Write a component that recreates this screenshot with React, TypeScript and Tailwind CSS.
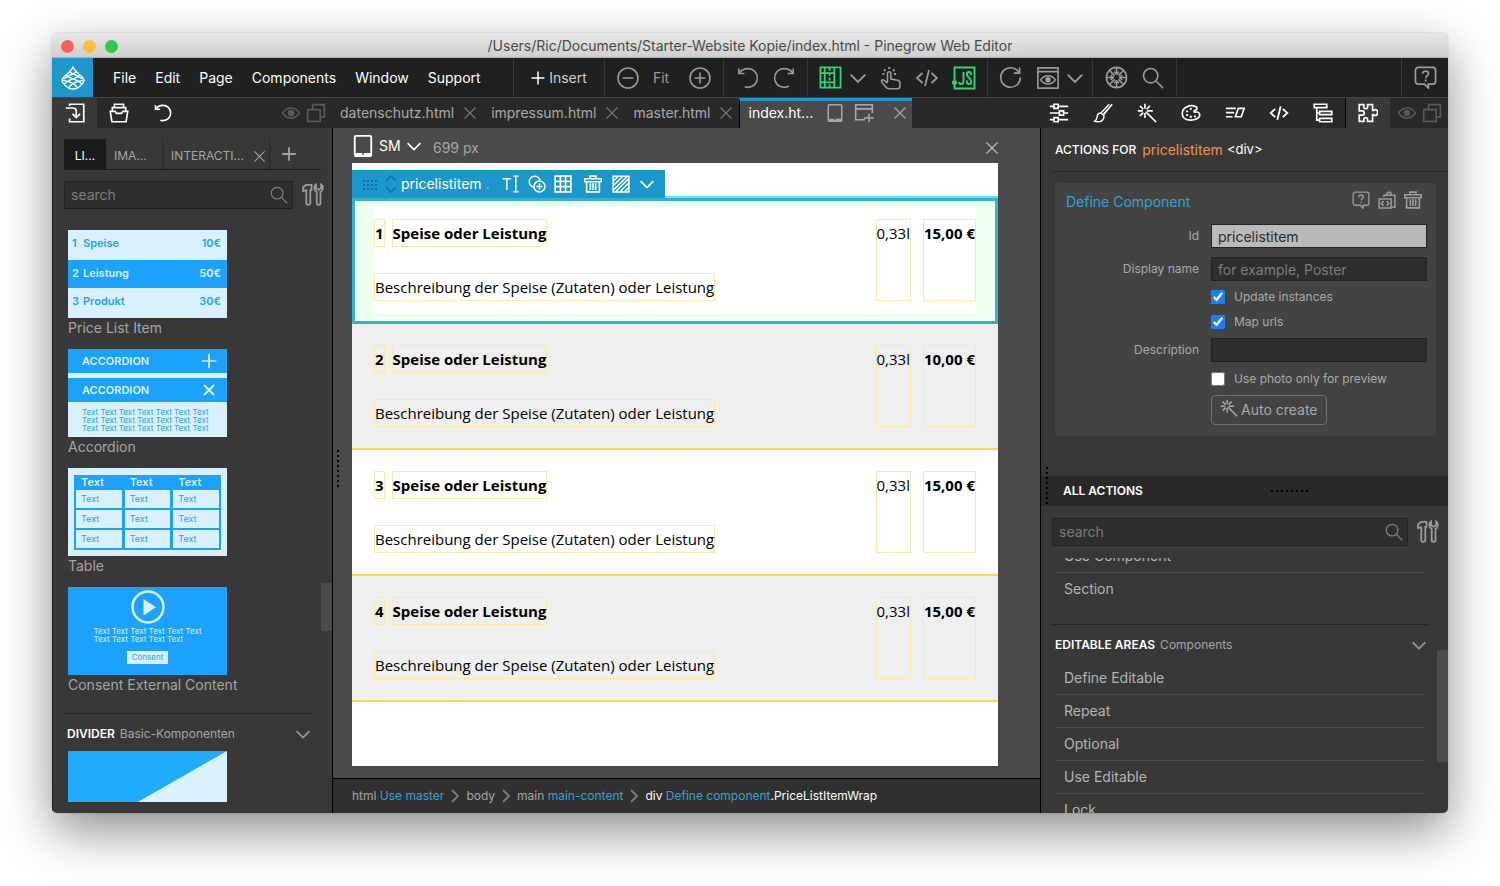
import type { ReactNode } from "react";

/* ---------- icons ---------- */

type IconProps = { className?: string; children: ReactNode; w?: number };

function Svg({ className = "size-6", children, w = 1.5 }: IconProps) {
  return (
    <svg
      viewBox="0 0 24 24"
      className={`${className} shrink-0`}
      fill="none"
      stroke="currentColor"
      strokeWidth={w}
      aria-hidden="true"
    >
      {children}
    </svg>
  );
}

const Logo = () => (
  <Svg className="size-6" w={1.3}>
    <path d="M12 1c1.500 3.500 4.500 6 7.500 8.600 2 1.700 3.500 3.300 3.500 4.900 0 2.300-2.500 4.300-5 6.500-1.600 1.500-3.500 2-6 2s-4.400-.5-6-2c-2.500-2.200-5-4.200-5-6.500 0-1.600 1.500-3.200 3.500-4.900C7.500 7 10.500 4.500 12 1z" />
    <path d="M8.500 5.500c1 2 5 2.500 8 4.500 2 1.300 3.800 2 4.500 3M5 9c2 2.800 6 3 9.500 4.800 3 1.500 5 2 6 4.200M1.500 14c3 1 7 1.500 10.500 3.500 2.500 1.500 4 2.500 4.500 5" />
    <path d="M15.500 5.500c-1 2-5 2.500-8 4.500-2 1.300-3.800 2-4.500 3M19 9c-2 2.800-6 3-9.500 4.800-3 1.500-5 2-6 4.200M22.500 14c-3 1-7 1.500-10.500 3.500-2.500 1.500-4 2.500-4.500 5" />
  </Svg>
);

const Plus = ({ className = "size-4" }: { className?: string }) => (
  <Svg className={className} w={2.6}>
    <path d="M12 1v22M1 12h22" />
  </Svg>
);
const PlusThin = () => (
  <Svg className="size-[18px]" w={2.4}>
    <path d="M12 3v18M3 12h18" />
  </Svg>
);
const Cross = ({ className = "size-3" }: { className?: string }) => (
  <Svg className={className} w={2.200}>
    <path d="M1 1l22 22M23 1L1 23" />
  </Svg>
);
const Chevron = ({ className = "size-4" }: { className?: string }) => (
  <Svg className={className} w={2.8}>
    <path d="M1 7l11 11L23 7" />
  </Svg>
);
const ZoomOut = () => (
  <Svg w={1.600}>
    <circle cx="12" cy="12" r="10" />
    <path d="M6.500 12h11" />
  </Svg>
);
const ZoomIn = () => (
  <Svg w={1.600}>
    <circle cx="12" cy="12" r="10" />
    <path d="M6.500 12h11M12 6.500v11" />
  </Svg>
);
const Undo = ({ className = "size-6", w = 1.7 }: { className?: string; w?: number }) => (
  <Svg className={className} w={w}>
    <path d="M2 1.500v5.500h6" />
    <path d="M2.500 6.500C4.500 3.500 8 1.800 12 1.800c6 0 10.200 4.500 10.200 10.200S17.800 22.200 12 22.200c-1.500 0-2.500-.2-3.500-.6" />
  </Svg>
);
const Redo = () => (
  <Svg className="size-[22px]" w={1.700}>
    <path d="M22 1.500v5.500h-6" />
    <path d="M21.500 6.500C19.500 3.500 16 1.800 12 1.800 6 1.800 1.800 6.300 1.800 12S6.200 22.200 12 22.200c2 0 4-.6 5.500-1.700" />
  </Svg>
);
const Reload = () => (
  <Svg className="size-[23px]" w={1.700}>
    <path d="M21.500 1.500v6h-6" />
    <path d="M21 7C19 3.800 15.800 1.800 12 1.800 6.200 1.800 1.800 6.300 1.800 12S6.200 22.200 12 22.200 22.200 17.800 22.200 12" />
  </Svg>
);
const GridGuides = () => (
  <Svg className="size-[23px]" w={1.900}>
    <path d="M1.500 1.500h21v21h-21zM6 1.500v21M16 1.500v21M1.500 7.500H16M1.500 17H16" />
    <path d="M11 1.500v3.500M11 7.500v3M11 12v3M11 19v3.500" />
  </Svg>
);
const Hand = () => (
  <Svg w={1.600}>
    <path d="M8.500 16V7.500a1.700 1.700 0 013.400 0V13l6.600 1.200c1.600.3 2.500 1.300 2.500 2.800V20c0 1.700-1 2.700-2.500 2.700H10c-1.500 0-2.300-.6-3.200-1.700l-4-4.700c-1.300-1.600.8-3.300 2.200-2l3.500 2.700" />
    <path d="M3.500 8h2M5 3.500l1.500 1.300M10.200 1v2M15.500 3.500L14 4.800M17 8h-2" strokeWidth="2.200" />
  </Svg>
);
const Code = ({ className = "size-6", w = 1.7 }: { className?: string; w?: number }) => (
  <Svg className={className} w={w}>
    <path d="M7.500 7L2 12l5.500 5M16.500 7l5.500 5-5.500 5M14 4l-4 16" />
  </Svg>
);
const ScriptBadge = () => (
  <Svg w={1.900}>
    <path d="M2.500 14V1.500h20v21h-20V19" />
    <circle cx="2.500" cy="16.500" r="2.500" fill="currentColor" stroke="none" />
    <path d="M11.500 6v9.500c0 1.500-.7 2.500-2 2.500S7 17.500 7 16M19 9V8c0-1.300-.8-2-2-2s-2.200.7-2.200 2c0 3.500 4.400 4 4.400 7.500 0 1.600-.9 2.500-2.200 2.500s-2.200-.8-2.200-2.500v-1" />
  </Svg>
);
const BrowserEye = () => (
  <Svg className="size-[22px]" w={1.800}>
    <path d="M1 1h22v22H1zM1 5h22" />
    <path d="M4 14c2-3 5-4.500 8-4.500s6 1.500 8 4.500c-2 3-5 4.500-8 4.500S6 17 4 14z" />
    <circle cx="12" cy="14" r="3" fill="currentColor" stroke="none" />
  </Svg>
);
const Snowflake = () => (
  <Svg className="size-[23px]" w={1.700}>
    <circle cx="12" cy="12" r="10.500" />
    <path d="M12 1.500v8M12 14.500v8M1.500 12h8M14.500 12h8M5 5l5 5M14 14l5 5M19 5l-5 5M10 14l-5 5" />
    <path d="M9.500 6L12 8.500 14.500 6M9.500 18l2.500-2.500L14.500 18M6 9.500L8.500 12 6 14.500M18 9.500L15.500 12l2.500 2.500" />
  </Svg>
);
const Magnifier = ({ className = "size-6", w = 1.7 }: { className?: string; w?: number }) => (
  <Svg className={className} w={w}>
    <circle cx="9.500" cy="9.500" r="7.800" />
    <path d="M15 15l8 8" />
  </Svg>
);
const Help = ({ className = "size-6" }: { className?: string }) => (
  <Svg className={className} w={1.800}>
    <path d="M4.500 1.500h15a3 3 0 013 3V16a3 3 0 01-3 3H15v4l-4-4H4.500a3 3 0 01-3-3V4.500a3 3 0 013-3z" />
    <path d="M9 8.200C9 6.300 10.300 5.300 12 5.300s3.200 1 3.200 2.700c0 2-3 2.200-3 4.700M12.200 14.200v2" />
  </Svg>
);
const InsertPanel = () => (
  <Svg className="size-5" w={2}>
    <path d="M5.500 3.500v-2h17v21h-17v-4" />
    <path d="M1 6h8.500c2.500 0 4 1.500 4 4v7M9 13l4.500 4.500L18 13" />
  </Svg>
);
const Drawer = () => (
  <Svg className="size-5" w={2}>
    <path d="M4 10V5.500h16V10M6.500 5.500v-4h11v4" />
    <path d="M1.500 10h6l1.500 2.500h6L16.500 10h6l-2 12.500h-17z" />
  </Svg>
);
const Eye = () => (
  <Svg className="size-5" w={1.800}>
    <path d="M2 12c2.500-4 6-6 10-6s7.500 2 10 6c-2.500 4-6 6-10 6S4.500 16 2 12z" />
    <circle cx="12" cy="12" r="4" fill="currentColor" stroke="none" />
  </Svg>
);
const Copy = () => (
  <Svg className="size-5" w={2}>
    <path d="M8 7V2h14v15h-5M2 8h15v14H2z" />
  </Svg>
);
const Tablet = ({ className = "size-5" }: { className?: string }) => (
  <Svg className={className} w={2}>
    <rect x="3" y="1" width="18" height="22" rx="1.500" />
    <path d="M3 21h18" strokeWidth="3" />
    <circle cx="12" cy="20.700" r="1" fill="#4a4a4a" stroke="none" />
  </Svg>
);
const WindowPlus = () => (
  <Svg className="size-5" w={1.900}>
    <path d="M13 20H2V2h20v10M2 7h20M18 13v10M12 18h12" />
  </Svg>
);
const Sliders = () => (
  <Svg className="size-5" w={2}>
    <path d="M1 4h5M11 4h12M1 12h11M18 12h5M1 20h5M11 20h12M6 1.500h5v5H6zM12.500 9.500h5v5h-5zM6 17.500h5v5H6z" />
  </Svg>
);
const Brush = () => (
  <Svg className="size-5" w={1.700}>
    <path d="M23 1.500L12.500 13.500M19.500 1.500L9.500 12M23 1.500l-10 12.500" />
    <path d="M9 12c-2.500.2-3.800 1.800-4 4.500-.2 2.300-1 4-3 5.500 4.500 1 9.500.2 10.800-3.800.4-1.500.4-2.400.2-3.200z" />
  </Svg>
);
const Wand = ({ className = "size-5" }: { className?: string }) => (
  <Svg className={className} w={2}>
    <path d="M10.500 10.500l12.500 12.500M9.500 1v6M9.500 12v6M1 9.500h6M12 9.500h7M3.500 3.500l4 4M15.500 3.500l-4 4M3.500 15.500l4-4" />
  </Svg>
);
const Palette = () => (
  <Svg className="size-5" w={2}>
    <path d="M18 4.500C11 1 1.500 5 1.500 12.500c0 5 4 8 10 8 5.500 0 11-2 11-6 0-3.500-3-4-5-3.500-2.500.5-2.500-2 0-2.500 2-.5 2.500-3 .5-4z" />
    <path d="M6 10h2.500M10.500 7H13M6 14.500h2.500M10.500 16.500H13M15.500 16H18" strokeWidth="2.200" />
  </Svg>
);
const Motion = () => (
  <Svg className="size-5" w={2}>
    <path d="M1 6.500h12M1 11.500h10M1 16.500h8M16 6.500h7l-3.500 10h-7z" />
  </Svg>
);
const Tree = () => (
  <Svg className="size-5" w={2}>
    <path d="M1.500 1.500h15v4h-15zM8 10h14.500v4H8zM8 18.500h14.500v4H8zM4.500 5.500v15H8M4.500 12H8" />
  </Svg>
);
const Puzzle = () => (
  <Svg className="size-5" w={2}>
    <path d="M1.500 2H7v3.500a2.500 2.500 0 004.500 0V2h6v7h1.500c1-1.500 4.500-1.500 4.500 2.500S20 15.500 19 14h-1.500v8h-6v-3a2.500 2.500 0 00-4.500 0v3H1.500v-7.500H5a2.500 2.500 0 000-5H1.500z" />
  </Svg>
);
const Tools = () => (
  <svg
    viewBox="0 0 22 24"
    className="h-6 w-[22px] shrink-0"
    fill="none"
    stroke="currentColor"
    strokeWidth="1.800"
    aria-hidden="true"
  >
    <path d="M1 9V4.500L4 1.800h5.500v5H8.300V20c0 2.500-4 2.500-4 0V7.500H1z" />
    <path d="M14 1.500c-2.300 1.600-2.300 6 .7 7.300V20c0 2.500 3.800 2.500 3.800 0V8.800c3-1.300 3-5.700.7-7.300v3.700l-2.600 1.500L14 5.200z" />
  </svg>
);
const TextTool = () => (
  <Svg className="size-[18px]" w={1.900}>
    <path d="M1 5h11M6.500 5v15M15 1.500h7M15 22.500h7M18.500 1.500v21" />
  </Svg>
);
const AddClass = () => (
  <Svg className="size-[18px]" w={2}>
    <path d="M8.300 16.200A7.300 7.300 0 1116.200 8" />
    <circle cx="15.300" cy="15.300" r="7.300" />
    <path d="M12 8.700L8.500 12M15.300 11.300v8M11.300 15.300h8" />
  </Svg>
);
const Table = () => (
  <Svg className="size-[18px]" w={2.200}>
    <path d="M1.500 1.500h21v21h-21zM8.500 1.500v21M15.500 1.500v21M1.500 8.500h21M1.500 15.500h21" />
  </Svg>
);
const Trash = () => (
  <Svg className="size-[18px]" w={2.200}>
    <path d="M1 5h22v4H1zM8 5V1.500h8V5M3.500 9v13.500h17V9M8.500 11v9M12 11v9M15.500 11v9" />
  </Svg>
);
const Hatch = () => (
  <Svg className="size-[18px]" w={2}>
    <path d="M1.500 1.500h21v21h-21zM2 8l6-6M2 14L14 2M2 20L20 2M5 22L22 5M11 22l11-11M17 22l5-5" />
  </Svg>
);
const PasteCode = () => (
  <Svg className="size-[18px]" w={2}>
    <path d="M8 8V5.500h3.500C11.500.5 18 .5 18 5.500h4.500v16H19M10 5.500h10" />
    <path d="M1.500 10.500h16v12h-16zM7.500 13.500l-3 3 3 3M11.500 13.500l3 3-3 3" />
  </Svg>
);
const Crumb = () => (
  <svg viewBox="0 0 8 14" className="h-3.5 w-2 shrink-0 text-[#7d7d7d]" fill="none" stroke="currentColor" strokeWidth="1.800" aria-hidden="true">
    <path d="M1 1l6 6-6 6" />
  </svg>
);

function IconButton({
  label,
  className = "",
  children,
}: {
  label: string;
  className?: string;
  children: ReactNode;
}) {
  return (
    <button type="button" aria-label={label} className={`flex shrink-0 items-center justify-center ${className}`}>
      {children}
    </button>
  );
}

function Dots({ vertical = false }: { vertical?: boolean }) {
  return (
    <div className={vertical ? "flex flex-col gap-[3px]" : "flex gap-[3px]"}>
      {Array.from({ length: 8 }, (_, i) => (
        <span key={i} className="size-[2px] bg-black" />
      ))}
    </div>
  );
}

/* ---------- top bars ---------- */

function TitleBar() {
  return (
    <header className="relative flex h-[25px] shrink-0 items-center justify-center border-b border-[#b1b1b1] bg-linear-to-b from-[#e8e8e8] to-[#cfcfcf] pt-0.5">
      <div className="absolute left-[9px] flex gap-[9px]">
        <span className="size-[13px] rounded-full bg-[#fc605b]" />
        <span className="size-[13px] rounded-full bg-[#fdbc40]" />
        <span className="size-[13px] rounded-full bg-[#34c84a]" />
      </div>
      <h1 className="truncate text-sm text-[#4a4a4a]">
        /Users/Ric/Documents/Starter-Website Kopie/index.html - Pinegrow Web Editor
      </h1>
    </header>
  );
}

const menus = ["File", "Edit", "Page", "Components", "Window", "Support"];

function MenuBar() {
  return (
    <div className="flex h-10 shrink-0 border-b border-[#454545] bg-[#202020] text-[#9b9b9b]">
      <div className="flex w-[41px] shrink-0 items-center justify-center bg-[#1f97cb] text-white">
        <Logo />
      </div>
      <nav className="flex flex-1 items-center gap-[19px] pl-5 text-sm text-white">
        {menus.map((m) => (
          <button type="button" key={m}>
            {m}
          </button>
        ))}
      </nav>
      <div className="flex w-[91px] items-center justify-center border-l border-[#373737]">
        <button type="button" className="flex items-center gap-1 text-sm text-[#d0d0d0]">
          <Plus className="size-3.5 text-white" />
          Insert
        </button>
      </div>
      <div className="flex w-[119px] items-center justify-between border-l border-[#373737] px-[11px]">
        <IconButton label="Zoom out"><ZoomOut /></IconButton>
        <span className="pr-1.5 text-sm">Fit</span>
        <IconButton label="Zoom in"><ZoomIn /></IconButton>
      </div>
      <div className="flex w-[84px] items-center justify-center gap-3.5 border-l border-[#373737]">
        <IconButton label="Undo"><Undo className="size-[22px]" /></IconButton>
        <IconButton label="Redo"><Redo /></IconButton>
      </div>
      <div className="flex w-[180px] items-center justify-between border-l border-[#373737] px-[11px]">
        <div className="flex items-center gap-2">
          <IconButton label="Show grid" className="text-[#2fd676]"><GridGuides /></IconButton>
          <IconButton label="Grid options"><Chevron /></IconButton>
        </div>
        <IconButton label="Interact with page"><Hand /></IconButton>
        <IconButton label="Code"><Code /></IconButton>
        <IconButton label="Run scripts" className="text-[#2fd676]"><ScriptBadge /></IconButton>
      </div>
      <div className="flex w-[105px] items-center justify-between border-l border-[#373737] pr-[9px] pl-[11px]">
        <IconButton label="Reload"><Reload /></IconButton>
        <div className="flex items-center gap-2">
          <IconButton label="Preview in browser"><BrowserEye /></IconButton>
          <IconButton label="Browser options"><Chevron /></IconButton>
        </div>
      </div>
      <div className="flex w-[84px] items-center justify-between border-l border-[#373737] px-3">
        <IconButton label="Freeze"><Snowflake /></IconButton>
        <IconButton label="Find"><Magnifier className="size-[22px]" /></IconButton>
      </div>
      <div className="w-[225px] border-l border-[#373737]" />
      <div className="flex w-[47px] items-center justify-center border-l border-[#373737]">
        <IconButton label="Help"><Help className="size-[23px]" /></IconButton>
      </div>
    </div>
  );
}

const files = ["datenschutz.html", "impressum.html", "master.html"];
const tools: [string, ReactNode][] = [
  ["Properties", <Sliders />],
  ["Style", <Brush />],
  ["Effects", <Wand />],
  ["Design", <Palette />],
  ["Interactions", <Motion />],
  ["Source", <Code className="size-5" w={2.200} />],
  ["Tree", <Tree />],
];

function TabRow() {
  return (
    <div className="flex h-[30px] shrink-0 bg-[#292929] text-white">
      <div className="flex w-[280px] shrink-0 items-center">
        <IconButton label="Library" className="h-full w-[45px] bg-[#393939]"><InsertPanel /></IconButton>
        <IconButton label="Project" className="w-11"><Drawer /></IconButton>
        <IconButton label="History" className="w-11"><Undo className="size-[18px]" w={2.200} /></IconButton>
        <div className="ml-auto flex gap-[5px] pr-1.5 text-[#5a5a5a]">
          <IconButton label="Hide panel"><Eye /></IconButton>
          <IconButton label="Detach panel"><Copy /></IconButton>
        </div>
      </div>
      <div className="flex min-w-0 flex-1 items-center text-sm text-[#a9a9a9]">
        {files.map((f) => (
          <div key={f} className="flex items-center gap-2.5 pr-[7px] pl-2">
            <button type="button">{f}</button>
            <IconButton label={`Close ${f}`} className="text-[#777777]"><Cross className="size-3" /></IconButton>
          </div>
        ))}
        <div className="flex h-full w-[173px] items-center border-t-[3px] border-l border-t-[#1f97cb] border-l-black bg-[#4a4a4a] pr-1.5 pb-[3px] pl-2">
          <button type="button" className="text-white">index.ht...</button>
          <IconButton label="Device view" className="ml-auto"><Tablet className="size-[18px]" /></IconButton>
          <IconButton label="New window" className="ml-2.5"><WindowPlus /></IconButton>
          <IconButton label="Close index.html" className="ml-5"><Cross className="size-3" /></IconButton>
        </div>
      </div>
      <div className="flex shrink-0 items-center">
        {tools.map(([label, icon]) => (
          <IconButton key={label} label={label} className="w-11">{icon}</IconButton>
        ))}
        <IconButton label="Actions" className="h-full w-[45px] border-l border-black bg-[#393939]"><Puzzle /></IconButton>
        <div className="flex w-[58px] justify-center gap-[5px] text-[#5a5a5a]">
          <IconButton label="Hide actions"><Eye /></IconButton>
          <IconButton label="Detach actions"><Copy /></IconButton>
        </div>
      </div>
    </div>
  );
}

/* ---------- shared ---------- */

function SearchRow({ id }: { id: string }) {
  return (
    <div className="flex items-center gap-[9px]">
      <div className="flex h-7 min-w-0 flex-1 items-center border border-[#222222] bg-[#2e2e2e] px-1">
        <label htmlFor={id} className="sr-only">Search</label>
        <input
          id={id}
          placeholder="search"
          className="min-w-0 flex-1 bg-transparent pl-[2px] text-sm text-white outline-none placeholder:text-[#7d7d7d]"
        />
        <Magnifier className="size-[18px] text-[#7d7d7d]" w={1.700} />
      </div>
      <IconButton label="Tools" className="text-[#9b9b9b]"><Tools /></IconButton>
    </div>
  );
}

function SectionHead({ title, sub }: { title: string; sub: string }) {
  return (
    <div className="flex items-center border-t border-[#262626]">
      <h2 className="flex-1 pl-[3px] text-xs leading-10 font-semibold text-white">
        {title} <span className="pl-0.5 font-normal text-[#a5a5a5]">{sub}</span>
      </h2>
      <IconButton label={`Collapse ${title}`} className="pr-0.5 text-[#9b9b9b]"><Chevron className="size-3.5" /></IconButton>
    </div>
  );
}

/* ---------- library ---------- */

function Thumb({ label, children }: { label: string; children: ReactNode }) {
  return (
    <figure className="h-[119px]">
      <div className="h-[88px] w-[159px] overflow-hidden bg-[#d9f0fe] text-[#1ca1fd]">{children}</div>
      <figcaption className="text-sm leading-5 text-[#a5a5a5]">{label}</figcaption>
    </figure>
  );
}

function PriceThumb() {
  const rows = [
    ["1", "Speise", "10€"],
    ["2", "Leistung", "50€"],
    ["3", "Produkt", "30€"],
  ];
  return (
    <div className="text-[11px] font-semibold">
      {rows.map(([n, name, price], i) => (
        <div
          key={n}
          className={
            i === 1
              ? "flex h-7 items-center bg-[#1ca1fd] pr-1.5 pb-px pl-1 text-[#d9f0fe]"
              : "flex h-[30px] items-center pr-1.5 pb-1 pl-1"
          }
        >
          <span className="w-[11px]">{n}</span>
          <span className="flex-1">{name}</span>
          <span>{price}</span>
        </div>
      ))}
    </div>
  );
}

function AccordionThumb() {
  return (
    <div>
      <div className="mb-[5px] flex h-6 items-center justify-between bg-[#1ca1fd] pr-2.5 pl-3.5 text-[11px] font-semibold text-[#d9f0fe]">
        ACCORDION <Plus />
      </div>
      <div className="flex h-6 items-center justify-between bg-[#1ca1fd] pr-3 pl-3.5 text-[11px] font-semibold text-[#d9f0fe]">
        ACCORDION
        <Svg className="size-3" w={4}><path d="M2 2l20 20M22 2L2 22" /></Svg>
      </div>
      <div className="pt-1.5 pl-3.5 text-[8px] leading-2">
        {[0, 1, 2].map((r) => (
          <p key={r}>Text Text Text Text Text Text Text</p>
        ))}
      </div>
    </div>
  );
}

function TableThumb() {
  return (
    <div className="px-1.5 pt-[7px]">
      <div className="grid grid-cols-3 gap-x-[3px] gap-y-[2px] bg-[#1ca1fd] px-[2px] pb-[2px]">
        {Array.from({ length: 12 }, (_, i) =>
          i < 3 ? (
            <span key={i} className="h-[13px] pl-[5px] text-[11px] leading-[15px] font-semibold text-[#d9f0fe]">Text</span>
          ) : (
            <span key={i} className="h-[18px] bg-[#d9f0fe] pl-[5px] text-[9px] leading-[18px]">Text</span>
          ),
        )}
      </div>
    </div>
  );
}

function ConsentThumb() {
  return (
    <div className="flex h-full flex-col items-center bg-[#1ca1fd] pt-[3px] text-[8px] leading-2 text-[#d9f0fe]">
      <svg viewBox="0 0 34 34" className="size-[34px] shrink-0" aria-hidden="true">
        <circle cx="17" cy="17" r="15.500" fill="none" stroke="currentColor" strokeWidth="2.500" />
        <path d="M12.500 9v16.500L25 17.200z" fill="currentColor" />
      </svg>
      <div className="mt-[3px]">
        <p>Text Text Text Text Text Text</p>
        <p>Text Text Text Text Text</p>
      </div>
      <span className="mt-2 bg-[#d9f0fe] px-[5px] leading-[13px] text-[#1ca1fd]">Consent</span>
    </div>
  );
}

function Library() {
  return (
    <aside className="relative flex w-[281px] shrink-0 flex-col overflow-hidden border-r border-l border-r-black border-l-[#222222] bg-[#383838] pt-[11px] pl-[11px]">
      <div className="mr-[11px] flex h-[31px] shrink-0 items-stretch border-b border-[#1c1c1c] text-xs text-[#a5a5a5]">
        <button type="button" className="w-[42px] bg-[#1a1a1a] pt-1 text-white">LI...</button>
        <button type="button" className="w-[57px] border-r border-[#2b2b2b] pt-1 pl-2 text-left">IMA...</button>
        <div className="flex w-[107px] items-center justify-between border-r border-[#2b2b2b] pt-1 pr-1 pl-2">
          <button type="button">INTERACTI...</button>
          <IconButton label="Close tab"><Cross className="size-[11px]" /></IconButton>
        </div>
        <IconButton label="Add library" className="w-[38px]"><PlusThin /></IconButton>
      </div>
      <div className="mt-[11px] mr-2">
        <SearchRow id="library-search" />
      </div>
      <div className="mt-[21px] mb-[11px] min-h-0 flex-1 overflow-hidden">
        <div className="pl-1">
          <Thumb label="Price List Item"><PriceThumb /></Thumb>
          <Thumb label="Accordion"><AccordionThumb /></Thumb>
          <Thumb label="Table"><TableThumb /></Thumb>
          <Thumb label="Consent External Content"><ConsentThumb /></Thumb>
        </div>
        <div className="mt-[7px] mr-5">
          <SectionHead title="DIVIDER" sub="Basic-Komponenten" />
        </div>
        <svg viewBox="0 0 159 88" className="-mt-[3px] ml-1 h-[88px] w-[159px]" aria-hidden="true">
          <path d="M0 0h159v88H0z" fill="#d9f0fe" />
          <path d="M0 0h159L5 88H0z" fill="#1fabff" />
        </svg>
      </div>
      <div className="absolute top-[455px] right-0 h-12 w-[11px] bg-[#4c4c4c]" />
    </aside>
  );
}

/* ---------- canvas ---------- */

const items = [
  { n: "1", price: "15,00 €" },
  { n: "2", price: "10,00 €" },
  { n: "3", price: "15,00 €" },
  { n: "4", price: "15,00 €" },
];

function PriceItem({ n, price, index }: { n: string; price: string; index: number }) {
  const selected = index === 0;
  const frame = selected
    ? "h-[126px] border-[3px] border-[#35b1cc] bg-[#efffef] px-[19px] pt-1.5 pb-2"
    : index % 2
      ? "h-[126px] border-b-2 border-[#fdd74f] bg-[#efefef] px-[22px] py-[9px]"
      : "h-[126px] border-b-2 border-[#fdd74f] bg-white px-[22px] py-[9px]";
  const box = "border border-[#fbe9a8] leading-[26px] whitespace-nowrap";
  return (
    <article className={frame}>
      <div className={selected ? "flex h-full bg-white py-3" : "flex h-full py-3"}>
        <div className="flex flex-1 flex-col items-start justify-between">
          <div className="flex gap-[7px] font-bold">
            <span className={box}>{n}</span>
            <span className={box}>Speise oder Leistung</span>
          </div>
          <p className={box}>Beschreibung der Speise (Zutaten) oder Leistung</p>
        </div>
        <div className={`${box} mr-3 h-[82px]`}>0,33l</div>
        <div className={`${box} h-[82px] font-bold`}>{price}</div>
      </div>
    </article>
  );
}

function Canvas() {
  return (
    <main className="flex min-w-0 flex-1 flex-col bg-[#4a4a4a]">
      <div className="relative flex min-h-0 flex-1 flex-col pr-[42px] pb-3 pl-[19px]">
        <div className="absolute top-[322px] left-1">
          <Dots vertical />
        </div>
        <div className="flex h-[35px] shrink-0 items-center text-sm text-white">
          <Tablet className="size-[22px]" />
          <label htmlFor="device" className="sr-only">Device</label>
          <select id="device" defaultValue="SM" className="ml-[5px] w-7 appearance-none bg-transparent text-sm outline-none">
            <option>SM</option>
          </select>
          <Chevron className="size-3.5" />
          <span className="ml-3 pt-1 text-[#a5a5a5]">699 px</span>
          <IconButton label="Close view" className="ml-auto pt-1 text-[#c0c0c0]"><Cross className="size-3" /></IconButton>
        </div>
        <div className="relative min-h-0 flex-1 overflow-hidden bg-white pt-[35px] font-['Open_Sans',sans-serif] text-[15px] text-black">
          <div className="absolute top-[33px] right-0 left-0 h-[2px] bg-[#62e4f3]" />
          <div className="absolute top-[7px] left-0 flex h-7 w-[313px] items-center bg-[#1b97cb] pr-[11px] pl-[11px] font-['Inter',sans-serif] text-sm text-white">
            <div className="mt-0.5 grid grid-cols-4 gap-[2px]">
              {Array.from({ length: 12 }, (_, i) => (
                <span key={i} className="size-[2px] rounded-full bg-[#0f5f9f]" />
              ))}
            </div>
            <svg viewBox="0 0 12 18" className="ml-2 h-[18px] w-3 shrink-0 text-[#0f6aa8]" fill="none" stroke="currentColor" strokeWidth="1.300" aria-hidden="true">
              <path d="M1 6l5-5 5 5M1 12l5 5 5-5" />
            </svg>
            <span className="ml-1">pricelistitem</span>
            <span className="ml-1 text-[#7cc4e4]">.</span>
            <div className="ml-auto flex items-center gap-2">
              <IconButton label="Edit text"><TextTool /></IconButton>
              <IconButton label="Add class"><AddClass /></IconButton>
              <IconButton label="Edit grid"><Table /></IconButton>
              <IconButton label="Delete element" className="ml-1"><Trash /></IconButton>
              <IconButton label="Background" className="ml-0.5"><Hatch /></IconButton>
              <IconButton label="More" className="ml-0.5"><Chevron className="size-3.5" /></IconButton>
            </div>
          </div>
          {items.map((it, i) => (
            <PriceItem key={it.n} n={it.n} price={it.price} index={i} />
          ))}
        </div>
      </div>
      <footer className="flex h-[35px] shrink-0 items-center gap-[7px] border-t border-black bg-[#303030] pl-[19px] text-xs text-[#a5a5a5]">
        <span>html <a href="#master" className="text-[#35a3cf]">Use master</a></span>
        <Crumb />
        <span>body</span>
        <Crumb />
        <span>main <a href="#main-content" className="text-[#35a3cf]">main-content</a></span>
        <Crumb />
        <span className="text-white">div <a href="#component" className="text-[#35a3cf]">Define component</a>.PriceListItemWrap</span>
      </footer>
    </main>
  );
}

/* ---------- actions ---------- */

const rowGrid = "grid grid-cols-[133px_1fr] items-center gap-x-3";
const field = "h-6 w-full border border-[#222222] px-1.5 text-sm outline-none";

function Check({ id, label, on = false }: { id: string; label: string; on?: boolean }) {
  return (
    <div className="ml-[145px] flex h-[25px] items-center gap-[9px]">
      <input id={id} type="checkbox" defaultChecked={on} className="size-3.5 accent-[#1a7cff]" />
      <label htmlFor={id}>{label}</label>
    </div>
  );
}

function ActionRow({ label, last = false }: { label: string; last?: boolean }) {
  return (
    <li className={last ? "flex h-8 items-center pl-[9px]" : "flex h-[33px] items-center border-b border-[#4c4c4c] pl-[9px]"}>
      {label}
    </li>
  );
}

function Actions() {
  return (
    <aside className="relative flex w-[408px] shrink-0 flex-col overflow-hidden border-l border-black bg-[#383838]">
      <div className="ml-[11px] flex h-11 shrink-0 items-center gap-1 border-b border-[#2b2b2b] pl-[3px] text-[13px] text-white">
        <span className="text-xs font-medium">ACTIONS FOR</span>
        <span className="ml-0.5 text-sm text-[#ee9450]">pricelistitem</span>
        <span>&lt;div&gt;</span>
      </div>
      <form className="mr-3 ml-3.5 mt-[11px] h-[253px] shrink-0 rounded-sm bg-[#434343] pr-[9px] pl-[11px] text-xs text-[#a9a9a9]">
        <div className="flex h-[41px] items-center gap-2 pr-[5px] pb-1">
          <h2 className="flex-1 text-sm text-[#35a3cf]">Define Component</h2>
          <IconButton label="About component" className="pb-1 text-[#9b9b9b]"><Help className="size-[18px]" /></IconButton>
          <IconButton label="Paste code" className="pb-1 text-[#9b9b9b]"><PasteCode /></IconButton>
          <IconButton label="Remove component" className="pb-1 text-[#9b9b9b]"><Trash /></IconButton>
        </div>
        <div className={rowGrid}>
          <label htmlFor="cid" className="text-right">Id</label>
          <input id="cid" defaultValue="pricelistitem" className={`${field} bg-[#bababa] text-[#2b2b2b]`} />
        </div>
        <div className={`${rowGrid} mt-[9px] mb-[3px]`}>
          <label htmlFor="cname" className="text-right">Display name</label>
          <input id="cname" placeholder="for example, Poster" className={`${field} bg-[#2e2e2e] placeholder:text-[#7d7d7d]`} />
        </div>
        <Check id="update" label="Update instances" on />
        <Check id="urls" label="Map urls" on />
        <div className={`${rowGrid} mt-1 mb-1`}>
          <label htmlFor="cdesc" className="text-right">Description</label>
          <input id="cdesc" className={`${field} bg-[#2e2e2e]`} />
        </div>
        <Check id="photo" label="Use photo only for preview" />
        <button
          type="button"
          className="mt-1 ml-[145px] flex h-[30px] items-center gap-[3px] rounded-sm border border-[#6e6e6e] px-2 text-sm whitespace-nowrap"
        >
          <Wand className="mb-1 size-[18px]" />
          Auto create
        </button>
      </form>
      <div className="mt-10 flex h-[30px] shrink-0 items-center bg-[#292929] pl-[22px]">
        <h2 className="w-52 text-xs font-semibold text-white">ALL ACTIONS</h2>
        <Dots />
      </div>
      <div className="absolute top-[339px] left-[5px]">
        <Dots vertical />
      </div>
      <div className="mt-3 mr-[9px] ml-[11px] shrink-0">
        <SearchRow id="action-search" />
      </div>
      <div className="mt-3 min-h-0 flex-1 overflow-hidden pl-[11px]">
        <ul className="-mt-[18px] mr-[23px] ml-[3px] text-sm text-[#b5b5b5]">
          <ActionRow label="Use Component" />
          <ActionRow label="Section" last />
        </ul>
        <div className="mt-[19px] mr-5">
          <SectionHead title="EDITABLE AREAS" sub="Components" />
        </div>
        <ul className="-mt-[3px] mr-[23px] ml-[3px] text-sm text-[#b5b5b5]">
          {["Define Editable", "Repeat", "Optional", "Use Editable", "Lock"].map((l) => (
            <ActionRow key={l} label={l} />
          ))}
        </ul>
      </div>
      <div className="absolute top-[522px] right-0 h-28 w-[11px] bg-[#4c4c4c]" />
    </aside>
  );
}

export default function App() {
  return (
    <div className="flex h-screen flex-col bg-white px-[52px] pt-[33px] pb-[73px] font-['Inter',sans-serif]">
      <div className="flex min-h-0 flex-1 flex-col overflow-hidden rounded-[5px] shadow-[0_0_1px_rgba(0,0,0,0.5),0_18px_50px_rgba(0,0,0,0.45)]">
        <TitleBar />
        <MenuBar />
        <TabRow />
        <div className="flex min-h-0 flex-1">
          <Library />
          <Canvas />
          <Actions />
        </div>
      </div>
    </div>
  );
}
